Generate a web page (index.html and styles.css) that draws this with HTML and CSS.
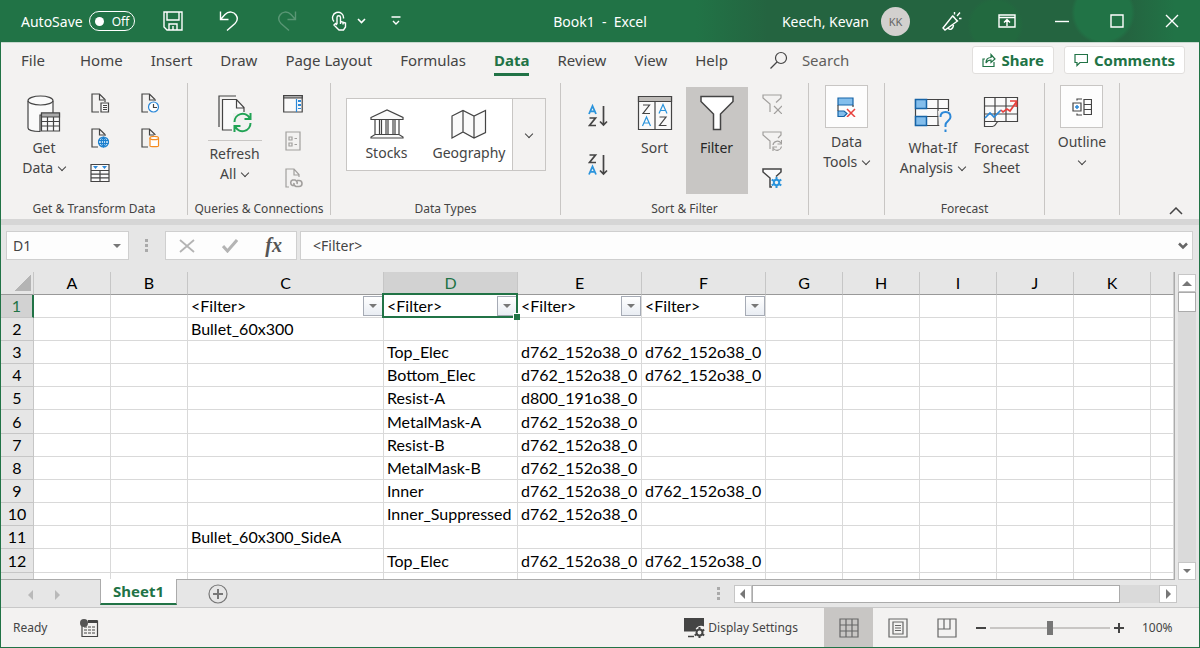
FILE: index.html
```html
<!DOCTYPE html>
<html lang="en">
<head>
<meta charset="utf-8">
<title>Book1 - Excel</title>
<link rel="stylesheet" href="styles.css">
</head>
<body>
<div class="window">
  <header class="titlebar">
    <div class="quick">
      <span class="autosave">AutoSave <button class="toggle" role="switch" aria-checked="false"><i class="knob"></i>Off</button></span>
      <button class="qbtn save" aria-label="Save"><svg width="20" height="20" viewBox="0 0 20 20"><path d="M1 1h18v18H4l-3-3zM4 1v8h12V1M6 19v-6h8v6M10 15v4"/></svg></button>
      <button class="qbtn undo" aria-label="Undo"><svg width="20" height="20" viewBox="0 0 20 20"><path d="M1.500 .5v8h8M1.500 8.500L6 3.500c4-4 9-2.500 11 .5s1.500 6-1 8.500L8 19.500"/></svg></button>
      <button class="qbtn redo" aria-label="Redo"><svg width="20" height="20" viewBox="0 0 20 20"><path d="M18.500 .5v8h-8M18.500 8.500L14 3.500c-4-4-9-2.500-11 .5s-1.500 6 1 8.500l8 7"/></svg></button>
      <button class="qbtn touch" aria-label="Touch or mouse mode"><svg width="36" height="20" viewBox="0 0 36 20"><path d="M3 10.500A5.500 5.500 0 1 1 12.500 7.500M6 13V6.500a1.500 1.500 0 0 1 3.500 0v4l5 1.500v4l-2 3H8L3 14l1.500-1.500L6 14M9.500 9v4M12 11v2.500"/><path d="M27 8l3.500 3.500L34 8" stroke-width="1.600"/></svg></button>
      <button class="qbtn" aria-label="Customize toolbar"><svg width="10" height="10" viewBox="0 0 10 10"><path d="M.5 1h9M2 5l3 3 3-3"/></svg></button>
    </div>
    <h1 class="doc">Book1&nbsp; -&nbsp; Excel</h1>
    <div class="account">
      <span>Keech, Kevan</span><span class="avatar">KK</span>
      <button class="wbtn horn" aria-label="Coming soon"><svg width="20" height="20" viewBox="0 0 20 20"><path d="M1 17L10.500 5l5 5L3 19zM11 5l4.500 5.500M6 16.500c1 3 5 2.500 5.500-2.500M12.500 3.500V1M15 5l3-3.500M17 7.500h2.500"/></svg></button>
      <button class="wbtn" aria-label="Ribbon display options"><svg width="18" height="14" viewBox="0 0 18 14"><path d="M1 1h16v12H1zM1 3.500h16M9 12V5.500M6 8.500l3-3 3 3"/></svg></button>
      <button class="wbtn" aria-label="Minimize"><svg width="14" height="14" viewBox="0 0 14 14"><path d="M0 7.500h14"/></svg></button>
      <button class="wbtn" aria-label="Maximize"><svg width="14" height="14" viewBox="0 0 14 14"><path d="M1 1h12v12H1z"/></svg></button>
      <button class="wbtn" aria-label="Close"><svg width="14" height="14" viewBox="0 0 14 14"><path d="M1 1l12 12M13 1L1 13"/></svg></button>
    </div>
  </header>

  <nav class="tabs">
    <a class="tab file" href="#">File</a><a class="tab" href="#">Home</a><a class="tab" href="#">Insert</a><a class="tab" href="#">Draw</a><a class="tab" href="#">Page Layout</a><a class="tab" href="#">Formulas</a><a class="tab current" href="#">Data</a><a class="tab" href="#">Review</a><a class="tab" href="#">View</a><a class="tab" href="#">Help</a>
    <label class="search"><svg width="18" height="18" viewBox="0 0 18 18"><circle cx="11" cy="7" r="5.500"/><path d="M7 11L.5 17.500"/></svg><input type="text" placeholder="Search"></label>
    <button class="pill"><svg width="14" height="14" viewBox="0 0 14 14"><path d="M3 6H1v7.500h11V9M4 10c0-4 2-5.500 5-5.500V1.500L13 6 9 9.500V7C7 7 5 8 4 10z"/></svg>Share</button>
    <button class="pill"><svg width="14" height="14" viewBox="0 0 14 14"><path d="M1 1.500h12.500v8H6l-3 3v-3H1z"/></svg>Comments</button>
  </nav>

  <section class="ribbon">
    <div class="group g-get">
      <div class="tools">
        <button class="big"><svg width="36" height="38" viewBox="0 0 36 38"><path fill="#fafafa" d="M2 6v27c0 2 5 3.500 12 3.500V20h13V6"/><ellipse cx="14.500" cy="5.500" rx="12.500" ry="4.500" fill="#fafafa"/><path fill="#fafafa" d="M15.500 18h18v18h-18z"/><path fill="#aaa" d="M15.500 18h18v4h-18z"/><path d="M15.500 26.500h18M15.500 31h18M21.500 22v14M27.500 22v14"/></svg>Get<br>Data <i class="chev"></i></button>
        <div class="minis two">
          <button class="mini" aria-label="From Text/CSV"><svg width="20" height="20" viewBox="0 0 20 20"><path d="M9 19H2V1h7.500L15 6.500V9M9.500 1v6H14"/><path fill="#fafafa" d="M11 10h7.500v9H11zM13 12.500h4M13 14.500h4M13 16.500h4"/></svg></button>
          <button class="mini" aria-label="Recent Sources"><svg width="20" height="20" viewBox="0 0 20 20"><path d="M8 19H2V1h7.500L15 6.500V8M9.500 1v6H14"/><circle cx="13.500" cy="14" r="5" fill="#fff" stroke="#2b88d8"/><path d="M13.500 11v3.500H17"/></svg></button>
          <button class="mini" aria-label="From Web"><svg width="20" height="20" viewBox="0 0 20 20"><path d="M8 19H2V1h7.500L15 6.500V8M9.500 1v6H14"/><circle cx="13.500" cy="14" r="5" fill="#cce6f9" stroke="#1a7fce"/><path stroke="#1a7fce" d="M8.500 12.500h10M8.500 15.500h10M13.500 9v10M13.500 9c-3 2-3 8 0 10c3-2 3-8 0-10"/></svg></button>
          <button class="mini" aria-label="Existing Connections"><svg width="20" height="20" viewBox="0 0 20 20"><path d="M8 19H2V1h7.500L15 6.500V7M9.500 1v6H14"/><path fill="#fff" stroke="#f58b1f" d="M10 10v8c0 1 8.500 1 8.500 0v-8"/><ellipse cx="14.250" cy="10" rx="4.250" ry="1.700" fill="#fff" stroke="#f58b1f"/></svg></button>
          <button class="mini" aria-label="From Table/Range"><svg width="20" height="20" viewBox="0 0 20 20"><path fill="#fafafa" d="M1 1.500h18v17H1z"/><path fill="#2b88d8" stroke="none" d="M3 3h5L5.500 6zM12 3h5l-2.500 3z"/><path d="M1 7.500h18M1 11.200h18M1 14.800h18M10 7.500v11"/></svg></button>
        </div>
      </div>
      <h2>Get &amp; Transform Data</h2>
    </div>
    <div class="group g-query">
      <div class="tools">
        <button class="big split"><svg width="36" height="38" viewBox="0 0 36 38"><path d="M2 32V1h17"/><path fill="#fafafa" d="M5.500 35V4.500h14l7.500 8V35z" stroke="none"/><path d="M15 35H5.500V4.500h14l7.500 8V17M19.500 4.500v8.500H27"/><path fill="#f3f2f1" stroke="none" d="M16 18h19v19H16z"/><path stroke="#21a355" stroke-width="2" d="M17.500 27a8 8 0 0 1 15-4M33.500 18v6h-6M33.500 28a8 8 0 0 1-15 4M17.500 37v-6h6"/></svg><span class="below">Refresh<br>All <i class="chev"></i></span></button>
        <div class="minis">
          <button class="mini" aria-label="Queries &amp; Connections"><svg width="20" height="20" viewBox="0 0 20 20"><path fill="#fafafa" d="M.7 1.500h18.500v16.500H.7z"/><path fill="#aaa" d="M.7 1.500h18.500V4H.7z"/><path stroke="#2b88d8" d="M13.500 5v13" /><path stroke="#2b88d8" stroke-dasharray="2 2" stroke-width="3" d="M16.500 6v9"/></svg></button>
          <button class="mini off" aria-label="Properties"><svg width="20" height="20" viewBox="0 0 20 20"><path d="M3 1h14v18H3zM6 6h3v3H6zM6 12h3v3H6zM11.500 7.500H14M11.500 13.500H14"/></svg></button>
          <button class="mini off" aria-label="Edit Links"><svg width="20" height="20" viewBox="0 0 20 20"><path d="M6 19H3V1h8l5 5.500V9M11 1v6h5"/><path stroke-width="1.600" d="M11 17.500H9.500a3 3 0 0 1 0-5.500H12a3 3 0 0 1 2 4M14 12.500h2a3 3 0 0 1 0 6h-3a3 3 0 0 1-2-3.500"/></svg></button>
        </div>
      </div>
      <h2>Queries &amp; Connections</h2>
    </div>
    <div class="group g-types">
      <div class="tools">
        <div class="gallery">
          <button class="type"><svg width="36" height="30" viewBox="0 0 36 30"><path fill="#fafafa" d="M2 8.500L18 1l16 7.500v2H2zM6 10.500v15M30 10.500v15M10.500 10.500v15M12.500 10.500v15M17 10.500v15M19 10.500v15M24 10.500v15M26 10.500v15M6 25.500h24l4 2.500v1H2v-1z"/></svg>Stocks</button>
          <button class="type wide"><svg width="36" height="30" viewBox="0 0 36 30"><path fill="#fafafa" d="M1 7l11-5.500L23 7l11.500-5.500v22L23 29l-11-6-11 6zM12 1.500V23M23 7v22"/></svg>Geography</button>
          <button class="more" aria-label="More data types"><i class="chev"></i></button>
        </div>
      </div>
      <h2>Data Types</h2>
    </div>
    <div class="group g-sort">
      <div class="tools">
        <div class="orders">
          <button class="order" aria-label="Sort A to Z"><svg width="20" height="24" viewBox="0 0 20 24"><path stroke="#2b94dc" stroke-width="1.800" d="M1 10L4.500 2 8 10M2.300 7.300h4.500"/><path stroke-width="1.700" d="M1.500 14h6l-6 7.500H8M15.500 2v19M12 17.500l3.500 3.500 3.500-3.500"/></svg></button>
          <button class="order" aria-label="Sort Z to A"><svg width="20" height="24" viewBox="0 0 20 24"><path stroke="#2b94dc" stroke-width="1.800" d="M1 21.500L4.500 13.500 8 21.500M2.300 18.800h4.500"/><path stroke-width="1.700" d="M1.500 2h6l-6 7.500H8M15.500 2v19M12 17.500l3.500 3.500 3.500-3.500"/></svg></button>
        </div>
        <button class="big sort"><svg width="36" height="38" viewBox="0 0 36 38"><path fill="#fafafa" d="M1.500 1.500h33v33h-33z"/><path fill="#bebbb8" d="M1.500 1.500h33v5h-33z"/><path d="M18 6.500v28M6 10h6.500L6 18.500h7M22.500 22H29l-6.500 8.500h7"/><path stroke="#2b94dc" d="M5.500 31l4-9 4 9M7 28h5M22 18.500l4-9 4 9M23.500 15.500h5"/></svg>Sort</button>
        <button class="big filter" aria-pressed="true"><svg width="36" height="38" viewBox="0 0 36 38"><path fill="#fff" stroke-width="1.500" d="M2 1.500h32v5L21.500 19v15.500h-7V19L2 6.500z"/></svg>Filter</button>
        <div class="minis">
          <button class="mini off" aria-label="Clear"><svg width="20" height="20" viewBox="0 0 20 20"><path d="M8 18V10L1 4V1h18v3l-5 4.500M12 12l8 8M20 12l-8 8"/></svg></button>
          <button class="mini off" aria-label="Reapply"><svg width="20" height="20" viewBox="0 0 20 20"><path d="M8 18V10L1 4V1h18v3l-3 3M11 14a4.500 4.500 0 0 1 8-2M19.500 9v4h-4M19.500 15.500a4.500 4.500 0 0 1-8 2M11 20v-4h4"/></svg></button>
          <button class="mini" aria-label="Advanced"><svg width="20" height="20" viewBox="0 0 20 20"><path fill="#fafafa" stroke="none" d="M1 1h18v3l-7 6v8H8v-8L1 4z"/><path stroke-width="1.500" d="M10 19H8V10L1 4V1h18v3l-5 4.500"/><circle cx="14.500" cy="14.500" r="2.700" stroke="#2b94dc" stroke-width="2"/><path stroke="#2b94dc" stroke-width="2" d="M14.500 9v3M14.500 17v3M9.700 11.700l2.600 1.500M16.700 15.800l2.600 1.500M9.700 17.300l2.600-1.500M16.700 13.200l2.600-1.500"/></svg></button>
        </div>
      </div>
      <h2>Sort &amp; Filter</h2>
    </div>
    <div class="group g-tools">
      <div class="tools">
        <button class="boxed"><span class="box"><svg width="20" height="20" viewBox="0 0 20 20"><path fill="#83beec" stroke="#1664a7" d="M2 1h15v7H2zM2 14h6l3 2.500-3 3H2z"/><path d="M2 8v6M17 8v2"/><path stroke="#e8403c" stroke-width="1.500" d="M11 12l8 8M19 12l-8 8"/></svg></span>Data<br>Tools <i class="chev"></i></button>
      </div>
      <h2></h2>
    </div>
    <div class="group g-fore">
      <div class="tools">
        <button class="big"><svg width="38" height="38" viewBox="0 0 38 38"><path fill="#fafafa" d="M1.500 4.500h33v26h-33z"/><path d="M1.500 13.500h33M1.500 21.500h33M24 4.500v26"/><path fill="#83beec" stroke="#1664a7" stroke-width="1.500" d="M1.500 4.500h11v9h-11zM1.500 21.500h11v9h-11z"/><path fill="#f3f2f1" stroke="none" d="M24 16h14v22H26z"/><path stroke="#2b88d8" stroke-width="2" d="M26.500 22c0-3 2-5 5-5s5 2 5 5c0 4-5 4-5 8v2M31.500 34.500v2.500"/></svg>What-If<br>Analysis <i class="chev"></i></button>
        <button class="big"><svg width="36" height="38" viewBox="0 0 36 38"><path fill="#fafafa" d="M1.500 2.500h33v24H15.500c-3 0-2 5-6 5h-8z"/><path d="M1.500 11h33M1.500 19h33M12 2.500v24M23 2.500v24M1.500 26.500h14"/><path stroke="#2b88d8" stroke-width="1.700" d="M2 23l5-5 4 4 7-7"/><path stroke="#e8403c" stroke-width="1.700" d="M18 15l2 2 4-3 3 2 7-10M27 6h6.500v6"/></svg>Forecast<br>Sheet</button>
      </div>
      <h2>Forecast</h2>
    </div>
    <div class="group g-out">
      <div class="tools">
        <button class="boxed"><span class="box"><svg width="20" height="20" viewBox="0 0 20 20"><path d="M1 6h8v8H1zM12 2.500h7.500v15H12zM12 7.500h7.500M12 12.500h7.500M5 3.500V2h5M5 16.500V18h5"/><path stroke="#2b88d8" stroke-width="1.500" d="M5 8v4M3 10h4"/></svg></span>Outline<br><i class="chev"></i></button>
      </div>
      <h2></h2>
    </div>
    <button class="collapse" aria-label="Collapse ribbon"><svg width="14" height="8" viewBox="0 0 14 8"><path stroke-width="1.500" d="M1 7l6-6 6 6"/></svg></button>
  </section>

  <section class="formula">
    <label class="namebox"><input type="text" value="D1" aria-label="Name box"><i class="tri"></i></label>
    <i class="dots"></i>
    <div class="fx">
      <button aria-label="Cancel"><svg width="16" height="14" viewBox="0 0 16 14"><path stroke="#b4b4b4" stroke-width="1.800" d="M1 1l14 12M15 1L1 13"/></svg></button>
      <button aria-label="Enter"><svg width="16" height="14" viewBox="0 0 16 14"><path stroke="#b4b4b4" stroke-width="3" d="M1 7l4.500 5L15 1"/></svg></button>
      <button class="fn" aria-label="Insert function">fx</button>
    </div>
    <label class="entry"><input type="text" value="&lt;Filter&gt;" aria-label="Formula bar"><svg width="10" height="8" viewBox="0 0 10 8"><path stroke="#666" stroke-width="2.500" d="M1 1.500l4 4 4-4"/></svg></label>
  </section>

  <main class="work">
    <div class="sheet">
      <table>
        <colgroup><col class="c-row"><col class="c-std"><col class="c-std"><col class="c-c"><col class="c-d"><col class="c-e"><col class="c-e"><col class="c-std"><col class="c-std"><col class="c-std"><col class="c-std"><col class="c-std"><col></colgroup>
        <thead><tr><th class="corner"></th><th>A</th><th>B</th><th>C</th><th class="on">D</th><th>E</th><th>F</th><th>G</th><th>H</th><th>I</th><th>J</th><th>K</th><th></th></tr></thead>
        <tbody>
          <tr><th class="on">1</th><td></td><td></td><td><div class="head">&lt;Filter&gt;<button class="drop" aria-label="Filter C"><i class="tri"></i></button></div></td><td class="active"><div class="head">&lt;Filter&gt;<button class="drop" aria-label="Filter D"><i class="tri"></i></button></div></td><td><div class="head">&lt;Filter&gt;<button class="drop" aria-label="Filter E"><i class="tri"></i></button></div></td><td><div class="head">&lt;Filter&gt;<button class="drop" aria-label="Filter F"><i class="tri"></i></button></div></td><td></td><td></td><td></td><td></td><td></td><td></td></tr>
          <tr><th>2</th><td></td><td></td><td>Bullet_60x300</td><td></td><td></td><td></td><td></td><td></td><td></td><td></td><td></td><td></td></tr>
          <tr><th>3</th><td></td><td></td><td></td><td>Top_Elec</td><td>d762_152o38_0</td><td>d762_152o38_0</td><td></td><td></td><td></td><td></td><td></td><td></td></tr>
          <tr><th>4</th><td></td><td></td><td></td><td>Bottom_Elec</td><td>d762_152o38_0</td><td>d762_152o38_0</td><td></td><td></td><td></td><td></td><td></td><td></td></tr>
          <tr><th>5</th><td></td><td></td><td></td><td>Resist-A</td><td>d800_191o38_0</td><td></td><td></td><td></td><td></td><td></td><td></td><td></td></tr>
          <tr><th>6</th><td></td><td></td><td></td><td>MetalMask-A</td><td>d762_152o38_0</td><td></td><td></td><td></td><td></td><td></td><td></td><td></td></tr>
          <tr><th>7</th><td></td><td></td><td></td><td>Resist-B</td><td>d762_152o38_0</td><td></td><td></td><td></td><td></td><td></td><td></td><td></td></tr>
          <tr><th>8</th><td></td><td></td><td></td><td>MetalMask-B</td><td>d762_152o38_0</td><td></td><td></td><td></td><td></td><td></td><td></td><td></td></tr>
          <tr><th>9</th><td></td><td></td><td></td><td>Inner</td><td>d762_152o38_0</td><td>d762_152o38_0</td><td></td><td></td><td></td><td></td><td></td><td></td></tr>
          <tr><th>10</th><td></td><td></td><td></td><td>Inner_Suppressed</td><td>d762_152o38_0</td><td></td><td></td><td></td><td></td><td></td><td></td><td></td></tr>
          <tr><th>11</th><td></td><td></td><td>Bullet_60x300_SideA</td><td></td><td></td><td></td><td></td><td></td><td></td><td></td><td></td><td></td></tr>
          <tr><th>12</th><td></td><td></td><td></td><td>Top_Elec</td><td>d762_152o38_0</td><td>d762_152o38_0</td><td></td><td></td><td></td><td></td><td></td><td></td></tr>
          <tr><th>13</th><td></td><td></td><td></td><td>Resist-A</td><td>d800_191o38_0</td><td></td><td></td><td></td><td></td><td></td><td></td><td></td></tr>
        </tbody>
      </table>
    </div>
    <div class="vscroll"><button aria-label="Scroll up"><i class="tri up"></i></button><div class="vthumb"></div><button class="end" aria-label="Scroll down"><i class="tri"></i></button></div>
  </main>

  <div class="sheetbar">
    <div class="nav"><button aria-label="Previous sheet"><i class="tri left"></i></button><button aria-label="Next sheet"><i class="tri right"></i></button></div>
    <button class="sheettab">Sheet1</button>
    <button class="add" aria-label="New sheet"><svg width="20" height="20" viewBox="0 0 20 20"><circle cx="10" cy="10" r="9"/><path stroke-width="2" d="M10 5v10M5 10h10"/></svg></button>
    <i class="dots"></i>
    <div class="hscroll"><button aria-label="Scroll left"><i class="tri left"></i></button><div class="hthumb"></div><button class="end" aria-label="Scroll right"><i class="tri right"></i></button></div>
  </div>

  <footer class="status">
    <span>Ready</span>
    <button class="macro" aria-label="Record macro"><svg width="20" height="20" viewBox="0 0 20 20"><path d="M3 6v12.500h15.500V3H9"/><path stroke-width="3" d="M9 3.500h9.500"/><path stroke-dasharray="3 1" d="M5 9h12M5 12h12M5 15h12"/><circle cx="5" cy="5" r="4" fill="#555" stroke="none"/></svg></button>
    <button class="display"><svg width="22" height="22" viewBox="0 0 22 22"><path fill="#444" stroke="none" d="M1 1h20v8.500a6 6 0 0 0-9 5H1z"/><path d="M5 19.500h6" stroke-width="1.500"/><circle cx="16.500" cy="15.500" r="3" stroke-width="2"/><path stroke-width="2" d="M16.500 10v2.500M16.500 18.500V21M11.700 12.700l2.200 1.300M19 17l2.200 1.300M11.700 18.300l2.200-1.300M19 14l2.200-1.300"/></svg>Display Settings</button>
    <button class="view on" aria-label="Normal view"><svg width="20" height="20" viewBox="0 0 20 20"><path d="M1 1h18v18H1zM7 1v18M13 1v18M1 7h18M1 13h18"/></svg></button>
    <button class="view" aria-label="Page layout view"><svg width="20" height="20" viewBox="0 0 20 20"><path d="M1 1h18v18H1zM5 4h10v12H5zM7 7.500h6M7 10h6M7 12.500h6"/></svg></button>
    <button class="view" aria-label="Page break preview"><svg width="20" height="20" viewBox="0 0 20 20"><path d="M1 1h18v18H1zM1 11h12V1M7 1v10"/></svg></button>
    <button class="step minus" aria-label="Zoom out"><svg width="10" height="10" viewBox="0 0 10 10"><path stroke-width="2" d="M0 5h10"/></svg></button>
    <input class="zoom" type="range" min="0" max="100" value="50" aria-label="Zoom">
    <button class="step" aria-label="Zoom in"><svg width="10" height="10" viewBox="0 0 10 10"><path stroke-width="2" d="M0 5h10M5 0v10"/></svg></button>
    <span class="percent">100%</span>
  </footer>
</div>
</body>
</html>
```
FILE: styles.css
```css
* { box-sizing: border-box; }
body { margin: 0; font-family: "Noto Sans", "Open Sans", sans-serif; color: #444; }
button, input { font: inherit; color: inherit; background: none; border: 0; padding: 0; margin: 0; }
svg { display: block; flex: none; fill: none; stroke: #444; stroke-width: 1.2; }
h1, h2 { margin: 0; font-weight: 400; }

.window { display: flex; flex-direction: column; height: 100vh; background: #f3f2f1; border: solid #217346; border-width: 0 1px 1px; overflow: hidden; }

/* Title bar */
.titlebar {
  display: grid; grid-template-columns: 1fr auto 1fr; align-items: center; height: 42px; flex: none; color: #fff; font-size: 14px;
  background:
    radial-gradient(circle at 92% 30%, #217346 28px, transparent 32px),
    radial-gradient(circle at 83% 60%, #22693f 24px, transparent 28px),
    linear-gradient(90deg, #217346 58%, #246440 64%, #246440 94%, #217346 98%);
}
.titlebar svg { stroke: #fff; stroke-width: 1.4; }
.quick { display: flex; align-items: center; padding-left: 20px; }
.autosave { display: flex; align-items: center; gap: 6px; }
.toggle { display: flex; align-items: center; gap: 8px; width: 46px; height: 20px; padding-left: 5px; border: 1px solid #fff; border-radius: 10px; font-size: 12px; }
.knob { width: 9px; height: 9px; border-radius: 50%; background: #fff; }
.save { margin-left: 28px; }
.undo { margin-left: 36px; }
.redo { margin-left: 38px; opacity: .25; }
.touch { margin: 0 24px 0 34px; }
.doc { font-size: 14px; }
.account { display: flex; align-items: center; justify-content: flex-end; }
.avatar { width: 29px; height: 29px; margin: 0 22px 0 12px; border-radius: 50%; background: #d2d0ce; color: #666; font-size: 11px; line-height: 29px; text-align: center; }
.wbtn { display: flex; justify-content: center; width: 55px; }
.horn { width: 40px; margin-right: 7px; }

/* Ribbon tabs */
.tabs { display: flex; align-items: center; flex: none; height: 38px; padding: 0 14px 3px 20px; font-size: 15px; border-top: 1px solid #c8d8cf; }
.tab { margin-right: 28px; line-height: 26px; color: #444; text-decoration: none; border: solid transparent; border-width: 3px 0; }
.file { margin-right: 35px; }
.current { color: #217346; font-weight: 700; border-bottom-color: #217346; }
.search { display: flex; align-items: center; gap: 14px; flex: 1; padding-left: 14px; color: #605e5c; }
.search input { width: 100px; }
.search input::placeholder { color: #605e5c; opacity: 1; }
.pill { display: flex; align-items: center; gap: 6px; height: 28px; margin-left: 10px; padding: 0 9px; background: #fff; border: 1px solid #e1dfdd; border-radius: 3px; color: #217346; font-weight: 700; font-size: 15px; }
.pill svg { stroke: #217346; }

/* Ribbon */
.ribbon { display: flex; flex: none; height: 139px; padding: 3px 0 4px; font-size: 14px; line-height: 20px; }
.group { display: flex; flex-direction: column; border-right: 1px solid #c8c6c4; min-width: 0; }
.tools { display: flex; flex: 1; justify-content: center; align-items: flex-start; }
.group h2 { height: 12px; font-size: 12px; line-height: 12px; text-align: center; white-space: nowrap; }
.g-get { flex: 1 1 187px; }
.g-query { flex: 1 1 143px; }
.g-types { flex: 1 1 230px; }
.g-sort { flex: 1 1 248px; }
.g-tools { flex: 1 1 76px; }
.g-fore { flex: 1 1 160px; }
.g-out { flex: 1 1 75px; }
.collapse { flex: 1 1 79px; display: flex; align-items: flex-end; justify-content: flex-end; padding: 0 16px 0 0; }
.big { display: flow-root; padding-top: 12px; white-space: nowrap; text-align: center; }
.big svg { margin: 0 auto 5px; }
.split svg { margin-bottom: 7px; }
.below { display: block; padding-top: 3px; border-top: 1px solid #c8c6c4; width: 54px; }
.chev { display: inline-block; width: 6px; height: 6px; margin: 0 1px 3px 2px; border: solid #444; border-width: 0 1px 1px 0; transform: rotate(45deg); }
.minis { display: grid; gap: 17px; padding-top: 11px; }
.two { grid-template-columns: 20px 20px; gap: 15px 30px; padding-top: 10px; }
.g-get .tools { gap: 24px; padding-right: 6px; }
.g-query .tools { gap: 21px; padding-right: 8px; }
.off svg { stroke: #a19f9d; }
.gallery { display: flex; margin-top: 15px; height: 73px; background: #fff; border: 1px solid #c8c6c4; }
.type { display: flex; flex-direction: column; align-items: center; gap: 4px; width: 80px; padding-top: 10px; }
.wide { width: 85px; }
.more { width: 33px; background: #f3f2f1; border-left: 1px solid #c8c6c4; }
.orders { display: grid; gap: 25px; padding-top: 21px; margin-right: 17px; }
.sort { flex: none; width: 60px; }
.filter { display: flex; flex: none; flex-direction: column; align-items: center; width: 62px; height: 107px; margin: 4px 14px 0 1px; padding-top: 8px; background: #c8c6c4; color: #262626; }
.boxed { text-align: center; white-space: nowrap; padding-top: 2px; }
.box { display: flex; align-items: center; justify-content: center; width: 43px; height: 43px; margin: 0 auto 4px; background: #fdfdfd; border: 1px solid #c8c6c4; }
.g-fore .tools { gap: 8px; }

/* Formula bar */
.formula { display: flex; align-items: center; flex: none; height: 53px; padding: 0 6px 6px 5px; background: #e6e6e6; border-top: 6px solid #d6d6d6; font-size: 14px; }
.formula label, .fx { display: flex; align-items: center; height: 29px; background: #fdfdfd; border: 1px solid #cfcfcf; }
.namebox { width: 123px; padding: 0 7px 0 6px; }
.namebox input, .entry input { flex: 1; min-width: 0; }
.dots { width: 3px; height: 13px; background: repeating-linear-gradient(#aaa 0 3px, transparent 3px 5px); }
.formula .dots { margin: 0 17px 0 16px; }
.fx { width: 132px; justify-content: space-between; padding: 0 14px 0 13px; margin-right: 3px; }
.fn { font-family: "Liberation Serif", serif; font-size: 20px; font-style: italic; font-weight: 700; color: #555; }
.entry { flex: 1; padding: 0 4px 0 12px; }
.tri { display: inline-block; border: 4px solid transparent; border-top-color: #777; border-bottom-width: 0; }
.up { border-width: 0 5px 5px; border-bottom-color: #777; }
.left { border-width: 5px 5px 5px 0; border-right-color: #777; border-top-color: transparent; }
.right { border-width: 5px 0 5px 5px; border-left-color: #777; border-top-color: transparent; }

/* Grid */
.work { display: flex; flex: 1; min-height: 0; background: #e6e6e6; }
.sheet { flex: 1; min-width: 0; overflow: hidden; border: solid #ababab; border-width: 0 1px 1px 0; background: #fff; }
table { width: 100%; table-layout: fixed; border-collapse: separate; border-spacing: 0; font-family: Lato, sans-serif; font-size: 16px; color: #000; }
.c-row { width: 33px; }
.c-std { width: 77px; }
.c-c { width: 196px; }
.c-d { width: 134px; }
.c-e { width: 124px; }
th { padding: 0; font-weight: 400; background: #e6e6e6; border: solid #c6c6c6; border-width: 0 1px 1px 0; line-height: 22px; }
thead th { border-bottom-color: #999; }
th.on { background: #d2d2d2; color: #217346; }
tbody th.on { border-right: 2px solid #217346; }
tbody tr:nth-child(6n) { height: 24px; }
td { height: 23px; padding: 0 0 0 3px; line-height: 22px; white-space: nowrap; border: solid #d9d9d9; border-width: 0 1px 1px 0; }
.corner { background: linear-gradient(135deg, #e6e6e6 50%, #b4b4b4 50%) 14px 3px / 16px 16px no-repeat #e6e6e6; }
.head { display: flex; justify-content: space-between; align-items: center; height: 22px; }
.drop { display: flex; align-items: center; justify-content: center; width: 20px; height: 20px; background: linear-gradient(#fff, #e9edf3); border: 1px solid #a6abb5; }
.active { position: relative; }
.active::before { content: ""; position: absolute; inset: -2px -1px -1px -2px; border: 2px solid #217346; pointer-events: none; }
.active::after { content: ""; position: absolute; right: -3px; bottom: -3px; width: 6px; height: 6px; background: #217346; border: solid #fff; border-width: 1px 0 0 1px; }
.vscroll { display: flex; flex-direction: column; width: 18px; margin: 2px 3px 0 3px; background: #dadada; }
.vscroll button, .hscroll button { display: flex; flex: none; align-items: center; justify-content: center; width: 18px; height: 18px; background: #fff; border: 1px solid #c6c6c6; }
.vthumb { height: 20px; background: #fff; border: 1px solid #ababab; }
.vscroll .end { margin-top: auto; }

/* Sheet tabs */
.sheetbar { display: flex; align-items: center; flex: none; height: 28px; background: #e6e6e6; border-bottom: 1px solid #c8c8c8; }
.nav { display: flex; gap: 22px; width: 99px; padding-left: 27px; opacity: .4; }
.sheettab { position: relative; align-self: flex-start; width: 77px; height: 26px; margin-top: -1px; background: #fff; border: solid #ababab; border-width: 0 1px 2px; border-bottom-color: #217346; color: #217346; font-size: 15px; font-weight: 700; line-height: 22px; }
.add { margin: 0 auto 0 31px; }
.add svg { stroke: #777; }
.hscroll { display: flex; width: 37%; height: 18px; margin: 0 22px 0 14px; background: #dadada; }
.hthumb { width: 83%; background: #fff; border: 1px solid #ababab; }
.hscroll .end { margin-left: auto; }

/* Status bar */
.status { display: flex; align-items: center; flex: none; height: 39px; padding-left: 12px; font-size: 12px; }
.macro { margin: 0 auto 0 32px; }
.display { display: flex; align-items: center; gap: 3px; margin-right: 26px; }
.view { display: flex; align-items: center; justify-content: center; width: 49px; height: 39px; }
.view svg { stroke: #666; }
.view.on { background: #c8c6c4; }
.minus { margin-left: 5px; }
.zoom { appearance: none; width: 120px; height: 20px; margin: 0 4px; background: linear-gradient(#c8c6c4, #c8c6c4) center / 100% 2px no-repeat; }
.zoom::-webkit-slider-thumb { appearance: none; width: 6px; height: 14px; background: #777; }
.percent { width: 75px; padding-left: 18px; }
```
